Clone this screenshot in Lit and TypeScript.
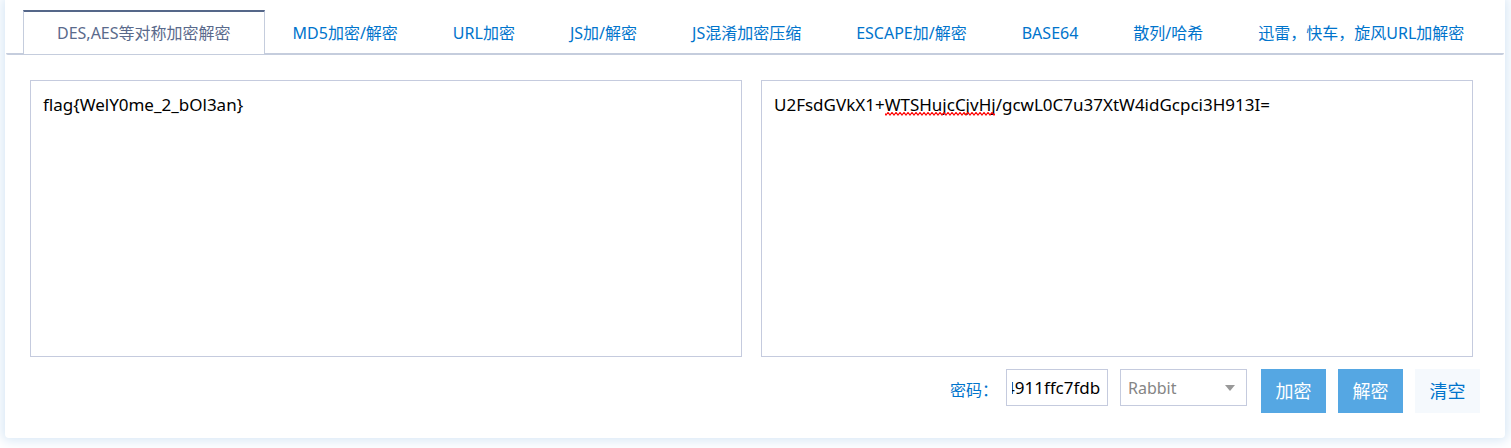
import { LitElement, html, css } from "lit";
import { customElement, state, query } from "lit/decorators.js";
import { classMap } from "lit/directives/class-map.js";

const TABS = [
  "DES,AES等对称加密解密",
  "MD5加密/解密",
  "URL加密",
  "JS加/解密",
  "JS混淆加密压缩",
  "ESCAPE加/解密",
  "BASE64",
  "散列/哈希",
  "迅雷，快车，旋风URL加解密",
];

const CIPHERS = ["AES", "DES", "RC4", "Rabbit", "TripleDes"];

@customElement("app-root")
export class AppRoot extends LitElement {
  @state() private active = 0;
  @state() private plain = "flag{WelY0me_2_bOl3an}";
  @state() private cipher = "U2FsdGVkX1+WTSHujcCjvHj/gcwL0C7u37XtW4idGcpci3H913I=";
  @query(".password") private password!: HTMLInputElement;

  static styles = css`
    :host {
      display: block;
      padding: 0 6px 10px 5px;
      overflow: hidden;
      font: 16px/24px "Noto Sans", "Noto Sans CJK SC", sans-serif;
      color: #0074cc;
    }
    * {
      box-sizing: border-box;
    }
    .card {
      padding: 10px 0 25px;
      background: #fff;
      border-radius: 0 0 4px 4px;
      box-shadow: 0 0 12px 3px #d9e8f6;
    }
    .tabs {
      display: flex;
      gap: 1px;
      margin: 0 1px;
      padding: 0 17px;
      border-bottom: 2px solid #c5cddd;
      border-radius: 2px;
    }
    .tab {
      padding: 11px 27px 8px;
      color: inherit;
      text-decoration: none;
      white-space: nowrap;
    }
    .tab.active {
      margin-bottom: -1px;
      padding: 9px 33px 8px;
      border: 1px solid #c5cddd;
      border-top: 2px solid #556789;
      border-bottom: 0;
      background: #fff;
      color: #5a6a8c;
    }
    .panes {
      display: grid;
      grid-template-columns: 1fr 1fr;
      gap: 19px;
      padding: 25px 32px 12px 25px;
    }
    .pane {
      display: grid;
      position: relative;
    }
    .text,
    .password,
    .cipher {
      margin: 0;
      border: 1px solid #c5cbde;
      border-radius: 0;
      outline: 0;
      background: #fff;
      color: #000;
      font: inherit;
    }
    .text {
      width: 100%;
      height: 277px;
      padding: 12px;
      resize: none;
      font-size: 17px;
    }
    .squiggle {
      position: absolute;
      top: 32px;
      left: 124px;
      pointer-events: none;
    }
    .controls,
    .fields,
    .actions {
      display: flex;
      align-items: flex-start;
      gap: 12px;
    }
    .controls {
      justify-content: flex-end;
      gap: 14px;
      padding: 0 25px;
    }
    .label {
      margin-right: -4px;
      padding-top: 9px;
    }
    .password {
      width: 102px;
      height: 37px;
      padding: 0 7px 0 5px;
      font-size: 17px;
    }
    .picker {
      position: relative;
    }
    .cipher {
      display: block;
      width: 127px;
      height: 37px;
      padding: 0 7px;
      appearance: none;
      color: #858585;
    }
    .arrow {
      position: absolute;
      top: 16px;
      right: 12px;
      pointer-events: none;
    }
    .button {
      width: 65px;
      height: 44px;
      padding: 0;
      border: 0;
      background: #55a7e3;
      color: #fff;
      font: inherit;
      font-size: 18px;
    }
    .button.clear {
      background: #f5f9fd;
      color: #0074cc;
    }
  `;

  firstUpdated() {
    this.password.scrollLeft = this.password.scrollWidth;
  }

  private pick(event: Event, index: number) {
    event.preventDefault();
    this.active = index;
  }

  private clear() {
    this.plain = "";
    this.cipher = "";
  }

  render() {
    return html`
      <main class="card">
        <nav class="tabs">
          ${TABS.map(
            (name, i) => html`<a
              href="#"
              class=${classMap({ tab: true, active: i === this.active })}
              @click=${(e: Event) => this.pick(e, i)}
              >${name}</a
            >`
          )}
        </nav>
        <div class="panes">
          <div class="pane">
            <textarea
              class="text"
              aria-label="明文"
              spellcheck="false"
              .value=${this.plain}
              @input=${(e: Event) => (this.plain = (e.target as HTMLTextAreaElement).value)}
            ></textarea>
          </div>
          <div class="pane">
            <textarea
              class="text"
              aria-label="密文"
              spellcheck="false"
              .value=${this.cipher}
              @input=${(e: Event) => (this.cipher = (e.target as HTMLTextAreaElement).value)}
            ></textarea>
            ${this.cipher
              ? html`<svg class="squiggle" width="110" height="4" aria-hidden="true">
                  <defs>
                    <pattern id="wave" width="4" height="4" patternUnits="userSpaceOnUse">
                      <path d="M-1 .5L1 3L3 .5L5 3" fill="none" stroke="#f00" stroke-width="1.2" />
                    </pattern>
                  </defs>
                  <rect width="110" height="4" fill="url(#wave)" />
                </svg>`
              : ""}
          </div>
        </div>
        <div class="controls">
          <div class="fields">
            <label class="label" for="password">密码：</label>
            <input id="password" class="password" type="text" value="4911ffc7fdb" />
            <div class="picker">
              <select class="cipher" aria-label="算法">
                ${CIPHERS.map((c) => html`<option ?selected=${c === "Rabbit"}>${c}</option>`)}
              </select>
              <svg class="arrow" width="10" height="6" aria-hidden="true">
                <path d="M0 0H10L5 6Z" fill="#999" />
              </svg>
            </div>
          </div>
          <div class="actions">
            <button class="button" type="button">加密</button>
            <button class="button" type="button">解密</button>
            <button class="button clear" type="button" @click=${this.clear}>清空</button>
          </div>
        </div>
      </main>
    `;
  }
}
